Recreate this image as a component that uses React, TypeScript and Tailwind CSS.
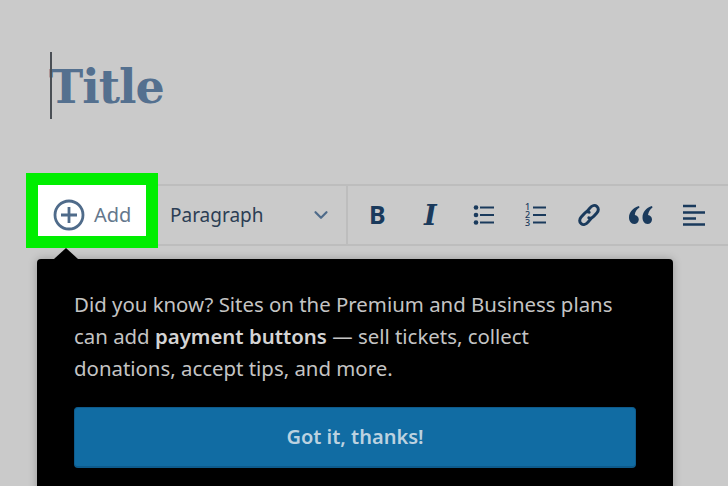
import { ChevronDown } from 'lucide-react';

function BulletIcon() {
  return (
    <svg width="22" height="20" viewBox="0 0 22 20" className="text-[#1a3a5c]">
      <circle cx="3" cy="2.5" r="2.3" fill="currentColor" />
      <circle cx="3" cy="10" r="2.3" fill="currentColor" />
      <circle cx="3" cy="17.5" r="2.3" fill="currentColor" />
      <path d="M7 2.500h14M7 10h14M7 17.500h14" stroke="currentColor" strokeWidth="1.8" />
    </svg>
  );
}

function NumberIcon() {
  return (
    <div className="relative w-[22px] h-[22px] text-[#1a3a5c]">
      <svg width="22" height="22" viewBox="0 0 22 22">
        <path d="M8 3.500h13M8 11h13M8 18.500h13" stroke="currentColor" strokeWidth="1.8" />
      </svg>
      <div className="absolute left-0 top-[-1px] text-[9px] leading-[8px] font-medium flex flex-col">
        <span>1</span>
        <span>2</span>
        <span>3</span>
      </div>
    </div>
  );
}

function LinkIcon() {
  return (
    <svg width="28" height="28" viewBox="0 0 28 28" fill="none" stroke="#1a3a5c" strokeWidth="3" strokeLinecap="round">
      <path d="M12 10.500l3-3.600c2-2.400 4.800-3.200 6.800-1.600s2 4.400 0 6.600l-3 3.400c-1.600 1.800-3.600 2.200-5 1.400" />
      <path d="M16 17.500l-3 3.600c-2 2.400-4.800 3.200-6.800 1.600s-2-4.400 0-6.600l3-3.400c1.600-1.800 3.600-2.200 5-1.400" />
    </svg>
  );
}

function QuoteIcon() {
  return (
    <svg width="24" height="18" viewBox="0 0 24 18" fill="#1a3a5c">
      <path d="M10 0C4 2 0 6 0 11.500 0 15 2 18 5.200 18c2.600 0 4.600-2 4.600-4.600 0-2.500-1.800-4.300-4-4.500C6 6 7.600 3.500 10.500 1.600z" />
      <path d="M23 0c-6 2-9.500 6-9.500 11.500 0 3.500 1.800 6.500 5 6.500 2.600 0 4.500-2 4.500-4.600 0-2.500-1.800-4.300-4-4.500C19.500 6 21 3.500 23.500 1.600z" />
    </svg>
  );
}

function AlignIcon() {
  return (
    <svg width="22" height="22" viewBox="0 0 22 22">
      <path d="M0 2h13M0 8.500h22M0 14.500h13M0 20.500h22" stroke="#1a3a5c" strokeWidth="2.600" />
    </svg>
  );
}

export default function App() {
  return (
    <div className="w-[728px] h-[486px] overflow-hidden bg-[#cacaca] font-['Noto_Sans',sans-serif]">
      <div className="h-[173px] pl-[50px] pt-[52px]">
        <div className="relative h-[67px]">
          <div className="absolute left-0 top-0 w-[1.5px] h-[67px] bg-[#4a4f55]" />
          <h1 className="-ml-[1px] font-['DejaVu_Serif',serif] font-bold text-[46px] leading-[70px] tracking-[-1px] text-[#54708f]">Title</h1>
        </div>
      </div>

      <div className="flex items-start">
        <button className="ml-[26px] w-[132px] h-[75px] border-[12px] border-[#00ee00] bg-white flex items-center gap-[9px] pl-[15px] pt-[9px] shrink-0">
          <svg width="32" height="32" viewBox="0 0 32 32" fill="none" stroke="#4f6b8a" strokeWidth="2.800">
            <circle cx="16" cy="16" r="14" />
            <path d="M16 8v16M8 16h16" />
          </svg>
          <span className="text-[20px] text-[#64778c]">Add</span>
        </button>

        <div className="mt-[11px] h-[62px] flex-1 flex items-center border-y-2 border-[#bdbdbd]">
          <div className="w-[190px] h-full flex items-center justify-between pl-[12px] pr-[14px] border-r-2 border-[#bdbdbd] shrink-0">
            <span className="text-[19px] text-[#2c3e54]">Paragraph</span>
            <ChevronDown size={22} strokeWidth={2.4} className="text-[#4f6b8a]" />
          </div>
          <div className="flex items-center pl-[21px] h-full">
            <span className="w-[52px] font-bold text-[25px] text-[#1a3a5c]">B</span>
            <span className="w-[52px] pl-[3px] pt-[3px] font-['DejaVu_Serif',serif] italic font-bold text-[27px] text-[#1a3a5c]">I</span>
            <div className="w-[52px]"><BulletIcon /></div>
            <div className="w-[50px]"><NumberIcon /></div>
            <div className="w-[54px]"><LinkIcon /></div>
            <div className="w-[54px]"><QuoteIcon /></div>
            <AlignIcon />
          </div>
        </div>
      </div>

      <div className="relative mt-[11px] ml-[37px] w-[636px] h-[240px] bg-black rounded-[4px] pt-[29px] px-[37px] shadow-[0_0_8px_rgba(0,0,0,0.25)]">
        <div className="absolute left-[17px] top-[-11px] w-0 h-0 border-x-[12px] border-x-transparent border-b-[11px] border-b-black" />
        <p className="max-w-[545px] text-[20.4px] leading-[32px] text-[#c4c4c4]">
          Did you know? Sites on the Premium and Business plans can add <b className="font-semibold text-[#d4d4d4]">payment buttons</b> — sell tickets, collect donations, accept tips, and more.
        </p>
        <button className="mt-[23px] w-[562px] h-[61px] rounded-[4px] bg-[#116ca3] border border-[#0e5b8c] border-b-2 text-[20px] font-semibold text-[#bcd2e0]">
          Got it, thanks!
        </button>
      </div>
    </div>
  );
}
